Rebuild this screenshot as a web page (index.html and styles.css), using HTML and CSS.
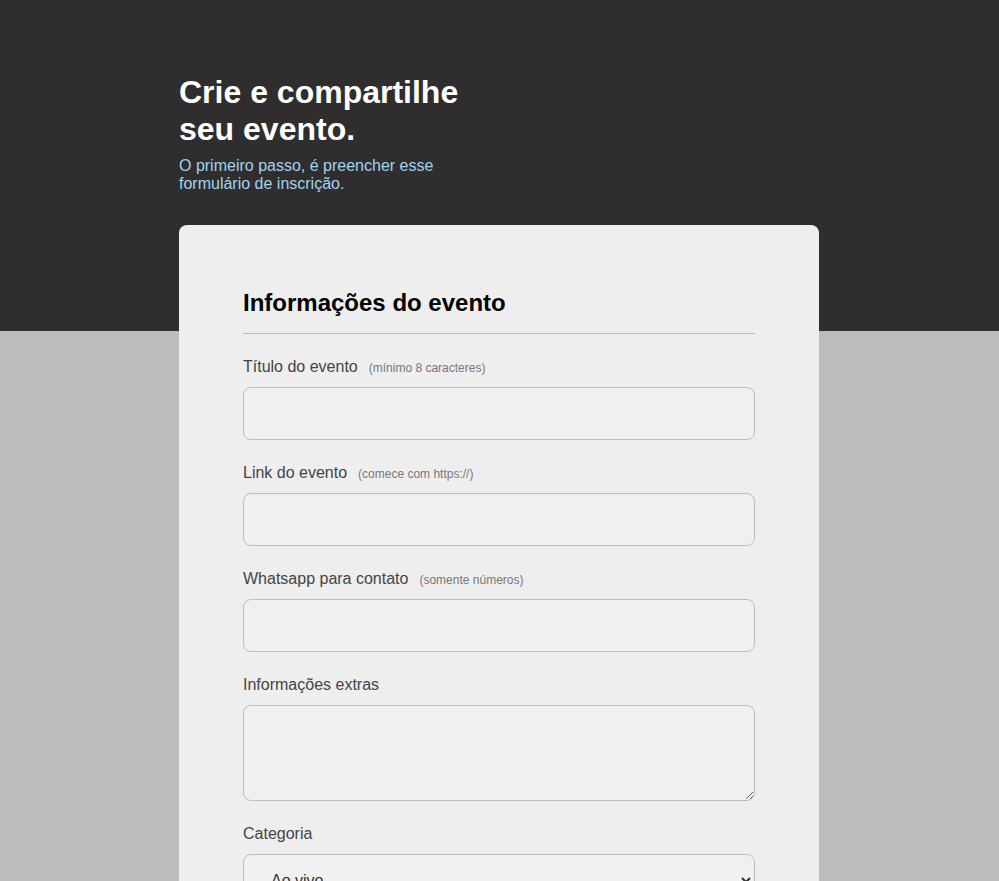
FILE: index.html
```html
<!DOCTYPE html>
<html lang="pt-BR">
<head>
<meta charset="utf-8">
<title>Crie e compartilhe seu evento</title>
<link rel="stylesheet" href="styles.css">
</head>
<body>
<div class="page">
  <header class="hero">
    <h1 class="hero-title">Crie e compartilhe seu evento.</h1>
    <p class="hero-sub">O primeiro passo, é preencher esse formulário de inscrição.</p>
  </header>
  <main class="card">
    <h2 class="card-title">Informações do evento</h2>
    <form class="form">
      <div class="field">
        <label class="label" for="titulo">Título do evento<span class="hint">(mínimo 8 caracteres)</span></label>
        <input class="input" id="titulo" type="text">
      </div>
      <div class="field">
        <label class="label" for="link">Link do evento<span class="hint">(comece com https://)</span></label>
        <input class="input" id="link" type="text">
      </div>
      <div class="field">
        <label class="label" for="whats">Whatsapp para contato<span class="hint">(somente números)</span></label>
        <input class="input" id="whats" type="text">
      </div>
      <div class="field">
        <label class="label" for="extras">Informações extras</label>
        <textarea class="input textarea" id="extras"></textarea>
      </div>
      <div class="field">
        <label class="label" for="cat">Categoria</label>
        <select class="input select" id="cat">
          <option>Ao vivo</option>
          <option>Online</option>
        </select>
      </div>
    </form>
  </main>
</div>
</body>
</html>
```
FILE: styles.css
```css
* { box-sizing: border-box; }
html, body { margin: 0; padding: 0; }
body {
  font-family: "Liberation Sans", Arial, sans-serif;
  background: linear-gradient(#2f2d2e 0, #2f2d2e 331px, #bdbdbd 331px, #bdbdbd 100%);
  min-height: 100vh;
}
.page {
  width: 640px;
  margin-left: calc((100% - 641px) / 2);
  padding-top: 74px;
}
.hero {
  width: 300px;
  margin-bottom: 32px;
}
.hero-title {
  margin: 0;
  font-size: 32px;
  font-weight: 700;
  line-height: normal;
  color: #ffffff;
}
.hero-sub {
  margin: 9px 0 0;
  font-size: 16px;
  line-height: normal;
  color: #a0d4ee;
}
.card {
  background: #eeeeee;
  border-radius: 8px;
  padding: 64px 64px 64px;
}
.card-title {
  margin: 0;
  font-size: 24px;
  font-weight: 700;
  line-height: normal;
  color: #000;
  padding-bottom: 16px;
  border-bottom: 1px solid #bdbdbd;
}
.form {
  display: flex;
  flex-direction: column;
  gap: 24px;
  padding-top: 24px;
}
.field {
  display: flex;
  flex-direction: column;
}
.label {
  font-size: 16px;
  line-height: 18px;
  height: 18px;
  color: #444444;
  margin-bottom: 11px;
}
.hint {
  font-size: 12px;
  line-height: 1;
  color: #777777;
  margin-left: 11px;
}
.input {
  width: 100%;
  height: 53px;
  border: 1px solid #bdbdbd;
  border-radius: 8px;
  background: #f0f0f0;
  font-family: "Liberation Sans", Arial, sans-serif;
  font-size: 16px;
  color: #444444;
  padding: 0 15px;
}
.textarea {
  height: 96px;
  padding: 12px 15px;
}
.select {
  color: #333333;
  padding-left: 23px;
}
```
